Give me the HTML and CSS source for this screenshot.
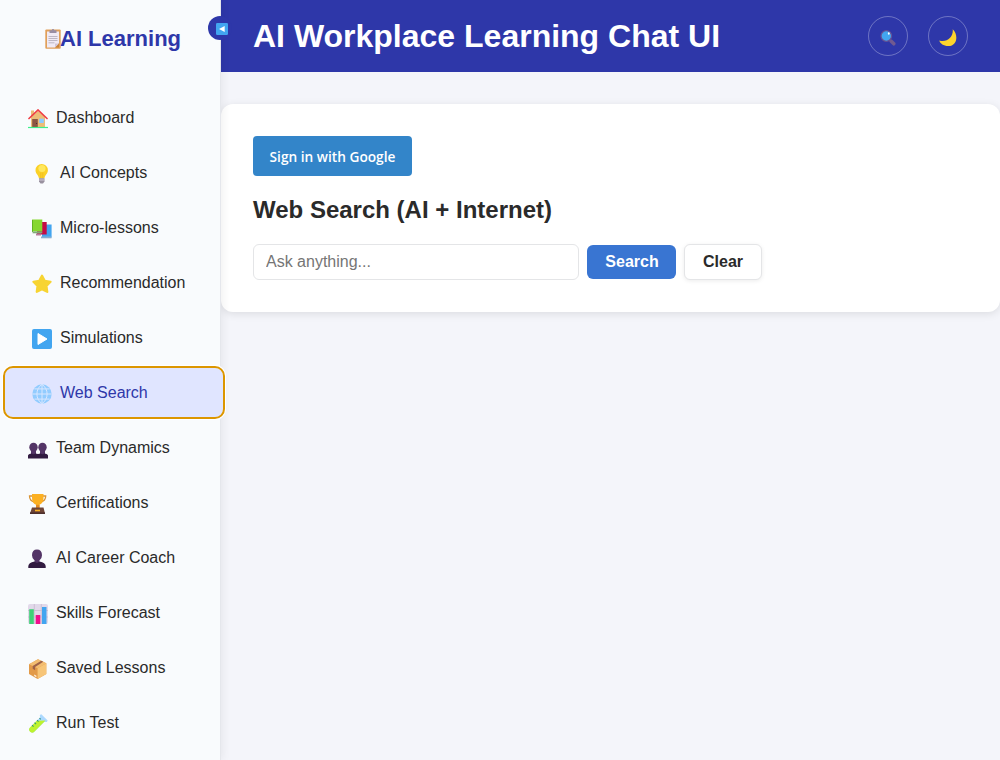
FILE: index.html
```html
<!DOCTYPE html>
<html lang="en">
<head>
<meta charset="utf-8">
<title>AI Workplace Learning Chat UI</title>
<link rel="stylesheet" href="styles.css">
</head>
<body>
<div class="app">
  <aside class="sidebar">
    <div class="brand">
      <svg class="brand-icon" viewBox="0 0 16 20"><rect x=".3" y=".6" width="15.4" height="19.200" rx="1" fill="#e1a05a"/><path d="M2 2.500h12v12l-4 4H2z" fill="#f0eaf5"/><path d="M14 14v4.500h-4z" fill="#c98235"/><path d="M10 14.500h4l-4 4z" fill="#d3c5d5"/><path d="M4.500 1.300h2.300a1.200 1.200 0 0 1 2.400 0h2.300V4h-7z" fill="#998ea4"/><path d="M3.500 7.500h9M3.500 9.500h9M3.500 11.500h9M3.500 13.800h6" stroke="#b0a9b8" stroke-width=".8"/></svg>
      <span>AI Learning</span>
    </div>
    <button class="toggle" aria-label="Collapse sidebar"><svg viewBox="0 0 12 12"><rect width="12" height="12" rx="1.200" fill="#42a5f0"/><path d="M8.700 3v6L3 6z" fill="#fff"/></svg></button>
    <nav class="nav">
      <a class="item"><svg viewBox="0 0 20 20"><path d="M3 1.500h3v6H3zM3 8l7-6 7 6v11H3z" fill="#ecbd78"/><path d="M4.200 10h5.600v8.500H4.200z" fill="#8c5543"/><circle cx="8.600" cy="14.500" r=".6" fill="#43252c"/><rect x="11.200" y="9.700" width="4.600" height="4.300" fill="#8dcaff"/><path d="M1 9.500 10 1l9 8.500" fill="none" stroke="#ef3e45" stroke-width="1.700" stroke-linecap="round"/><path d="M0 18.500h20" stroke="#3df08a" stroke-width="1.200"/></svg><span>Dashboard</span></a>
      <a class="item indented"><svg viewBox="0 0 20 20"><path d="M3.500 6.200a6.200 6.200 0 0 1 12.400 0c0 3.400-2.900 4.600-3.400 8H6.900c-.5-3.400-3.400-4.600-3.400-8z" fill="#fbd126"/><circle cx="10" cy="4.500" r="3.600" fill="#ffe85e"/><path d="M8.800 8.500v5.700m2-5.700v5.700" stroke="#eeb81f" stroke-width=".7"/><path d="M7 14.200h5.500v3.300l-1.500 2H8.500L7 17.500z" fill="#99919f"/><path d="M7 16h5.500" stroke="#d2c9d8"/></svg><span>AI Concepts</span></a>
      <a class="item indented"><svg viewBox="0 0 20 20"><path d="M10 5.500h9.600v13H10z" fill="#42a5f0"/><path d="M9 17.500h10.500v1.800H9z" fill="#86aed2"/><path d="M5 3h9.700v12.500H5z" fill="#c50b45"/><path d="M4 14.500h5v2H4z" fill="#b57b98"/><path d="M0 .5h10.300v12H0z" fill="#86d72f"/><path d="M.6 12.500h9.700v1.800H.6z" fill="#80a878"/><path d="M.4 1v12" stroke="#53a51d" stroke-width=".8"/></svg><span>Micro-lessons</span></a>
      <a class="item indented"><svg viewBox="0 0 20 20"><path d="m10 1.700 2.700 5.100 5.800 1-4.100 4.200.8 5.800L10 15.300l-5.200 2.500.8-5.800-4.100-4.200 5.800-1z" fill="#f7d432" stroke="#f7d432" stroke-width="2.300" stroke-linejoin="round"/></svg><span>Recommendation</span></a>
      <a class="item indented"><svg viewBox="0 0 20 20"><rect width="20" height="20" rx="2" fill="#42a5f0"/><path d="m6 4.500 9 5.500-9 5.500z" fill="#fff" stroke="#fff" stroke-linejoin="round"/></svg><span>Simulations</span></a>
      <a class="item indented active"><svg viewBox="0 0 20 20"><circle cx="10" cy="10" r="9.700" fill="#92ccff"/><path d="M10 .3v19.400M.3 10h19.400M2.500 4.900h15M2.500 15.100h15M10 .3C3.200 5 3.200 15 10 19.700M10 .3c6.800 4.700 6.800 14.700 0 19.400" fill="none" stroke="#d9e7ff" stroke-width="1"/></svg><span>Web Search</span></a>
      <a class="item"><svg viewBox="0 0 20 20"><g fill="#533466"><ellipse cx="5.500" cy="8.300" rx="4.200" ry="4.600"/><ellipse cx="14.500" cy="8.300" rx="4.200" ry="4.600"/><path d="M3 11h5v5H3zM12 11h5v5h-5z"/></g><path d="M0 19.500v-3q0-1 1.500-1.500l2-.5q2 1.500 4 0l2.500.5 2.500-.5q2 1.500 4 0l2 .5q1.500.5 1.500 1.500v3z" fill="#321b41"/></svg><span>Team Dynamics</span></a>
      <a class="item"><svg viewBox="0 0 20 20"><path d="M5 2H1.500q0 5 5 6M14 2h3.700q0 5-5 6" fill="none" stroke="#d99435" stroke-width="1.300"/><path d="M4 0h11.500v4q0 5-4 6.800V14H8v-3.200Q4 9 4 4z" fill="#fcb022"/><path d="M8 10.800h3.500V14H8z" fill="#e38b22"/><path d="M4 13.500h11.500l1.500 6H2z" fill="#6e4436"/><path d="M2 18.400h15V20H2z" fill="#4d302d"/><path d="M7 15.700h5v1.600H7z" fill="#fcb022"/></svg><span>Certifications</span></a>
      <a class="item"><svg viewBox="0 0 20 20"><path d="M4 6.200C4 2.500 5.800.6 9 .6s5 1.900 5 5.600q0 3.500-2.600 5.200V15H6.600v-3.600Q4 9.700 4 6.200z" fill="#533466"/><path d="M.3 19v-1.700q0-3.500 6.300-4.800 2.400 2.400 4.800 0 6.300 1.300 6.300 4.800V19z" fill="#321b41"/></svg><span>AI Career Coach</span></a>
      <a class="item"><svg viewBox="0 0 20 20"><rect width="20" height="20" rx="2" fill="#e2d9ea"/><path d="M6.300 0v20M13.300 0v20M0 6.500h20M0 13h20" stroke="#c8bbcf" stroke-width=".8"/><path d="M1.200 5.200h4.600V20H1.200z" fill="#3fd277"/><path d="M7.700 11h4.600v9H7.700z" fill="#f20f8d"/><path d="M14 3h4.500v17H14z" fill="#42a5f0"/></svg><span>Skills Forecast</span></a>
      <a class="item"><svg viewBox="0 0 20 20"><path d="m1 5.200 9-5 8.300 4v10.900L9.600 20 1 15z" fill="#e29a49"/><path d="m1 5.200 9-5 8.300 4-8.700 5z" fill="#f3bd71"/><path d="m9.600 9.200 8.700-5v10.900L9.600 20z" fill="#f7c578"/><path d="m4.700 7.100 8.500-5.300 2.100 1-8.200 5.200v3.300l-2.400-1.500z" fill="#9e6248"/><path d="m6.200 15.500 2.200 1.200v1.500l-2.200-1.200z" fill="#fff4e4"/></svg><span>Saved Lessons</span></a>
      <a class="item"><svg viewBox="0 0 20 20"><path d="m11.800 1 1.500-.8 6.400 6.400-.8 1.500-2.800-.1L6.400 17.700q-2.100 2-4.200-.1t-.1-4.200l10-10z" fill="#acd9ff"/><path d="m8.700 6.800 8.800-.2L6.300 17.800q-2.100 2-4.200-.1t-.1-4.200z" fill="#bdf32e"/><path d="m9.100 6.200 1.400 1.400M6.600 8.700 8 10.100M4.100 11.200l1.400 1.400M11.500 4.200l1.200 1.200" stroke="#30947d" stroke-width="1.100"/></svg><span>Run Test</span></a>
    </nav>
  </aside>
  <div class="page">
    <header class="header">
      <h1>AI Workplace Learning Chat UI</h1>
      <div class="actions">
        <button class="round" aria-label="Search"><svg viewBox="0 0 16 16"><path d="m11 11 2.800 2.800" stroke="#705a90" stroke-width="3.500" stroke-linecap="round"/><circle cx="6.300" cy="6" r="5.300" fill="#42a5f0" stroke="#665294" stroke-width="1.200"/><ellipse cx="8.800" cy="3.500" rx=".9" ry="1.300" fill="#fff"/></svg></button>
        <button class="round" aria-label="Dark mode"><svg class="moon" viewBox="0 0 18 18"><path d="M13.700.3C19.400 5.300 18.700 17 9.300 17 4.500 17 1.200 14.600.3 11.500 8 14 14.700 7.700 13.700.3z" fill="#fdd32c"/></svg></button>
      </div>
    </header>
    <main class="card">
      <button class="signin">Sign in with Google</button>
      <h2>Web Search (AI + Internet)</h2>
      <form class="search">
        <input type="text" placeholder="Ask anything...">
        <button type="button" class="btn primary">Search</button>
        <button type="button" class="btn">Clear</button>
      </form>
    </main>
  </div>
</div>
</body>
</html>
```
FILE: styles.css
```css
* { box-sizing: border-box; }
body { margin: 0; background: #f4f5fa; color: #2a2a2a; font-family: "Liberation Sans", Arial, sans-serif; font-size: 16px; }
button, input { font-family: inherit; margin: 0; }
svg { display: block; flex: none; }
.app { display: flex; height: 760px; overflow: hidden; }
.sidebar { position: relative; z-index: 1; width: 221px; flex: none; background: #f9fbfd; border-right: 1px solid #e5e7ec; box-shadow: 2px 0 8px rgba(0,0,0,.06); }
.brand { display: flex; height: 76px; padding: 1px 0 0 45px; align-items: center; color: #2e37a9; font-size: 22px; font-weight: 700; }
.brand-icon { width: 16px; height: 20px; margin-top: 1px; }
.brand span { margin-left: -1px; }
.toggle { position: absolute; top: 16px; right: -12px; display: flex; align-items: center; justify-content: center; width: 24px; height: 24px; padding: 2px 0 0 4px; border: 0; border-radius: 50%; background: #2e37a9; }
.toggle svg { width: 12px; height: 12px; }
.nav { display: flex; flex-direction: column; gap: 6px; padding: 16px 0 0 5px; }
.item { display: flex; align-items: center; width: 218px; height: 49px; padding-left: 22.500px; gap: 8.500px; border-radius: 8px; }
.item svg { width: 20px; height: 20px; margin-top: 3px; }
.item.indented { padding-left: 26.500px; }
.item.active { background: #e0e5ff; color: #2e37a9; outline: 2px solid #dc9600; box-shadow: 0 0 0 3px #fff; }
.nav { margin-top: 1px; }
.page { flex: 1; min-width: 0; }
.header { display: flex; align-items: center; justify-content: space-between; height: 72px; padding: 0 32px; background: #2e37a9; color: #fff; }
h1 { margin: 0; font-size: 32px; line-height: 37px; }
.actions { display: flex; gap: 20px; }
.round { display: flex; align-items: center; justify-content: center; width: 40px; height: 40px; padding: 3px 0 0; border: 1px solid rgba(255,255,255,.3); border-radius: 50%; background: transparent; }
.round svg { width: 16px; height: 16px; }
.round .moon { width: 18px; height: 18px; }
.card { height: 208px; margin-top: 32px; padding: 32px; border-radius: 12px; background: #fff; box-shadow: 0 2px 8px rgba(0,0,0,.1); }
.signin { display: block; width: 159px; height: 40px; padding: 0; border: 0; border-radius: 4px; background: #3385c9; color: #fff; font: 600 13.700px "Open Sans", sans-serif; }
h2 { margin: 20px 0; font-size: 24px; line-height: 28px; }
.search { display: flex; align-items: center; gap: 8px; }
.search input { width: 326px; height: 36px; padding: 0 12px; border: 1px solid #e4e5e7; border-radius: 6px; font-size: 16px; }
.search input::placeholder { color: #757575; }
.btn { width: 78px; height: 36px; padding: 0; border: 1px solid #e4e5e7; border-radius: 6px; background: #fff; box-shadow: 0 1px 4px rgba(0,0,0,.08); color: #2a2a2a; font-size: 16px; font-weight: 700; }
.btn.primary { width: 89px; height: 34px; padding-left: 1px; border: 0; background: #3975d2; box-shadow: none; color: #fff; }
```
